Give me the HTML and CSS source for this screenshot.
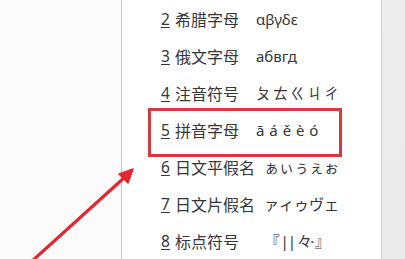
FILE: index.html
```html
<!DOCTYPE html>
<html lang="zh-CN">
<head>
<meta charset="utf-8">
<link rel="stylesheet" href="styles.css">
</head>
<body>
<div class="page">
  <div class="left"></div>
  <div class="panel">
    <ul class="menu">
      <li class="row"><span class="num">2</span><span class="label">希腊字母</span><span class="ex">αβγδε</span></li>
      <li class="row"><span class="num">3</span><span class="label">俄文字母</span><span class="ex">абвгд</span></li>
      <li class="row"><span class="num">4</span><span class="label">注音符号</span><span class="ex ex-bpmf">ㄆㄊㄍㄐㄔ</span></li>
      <li class="row"><span class="num">5</span><span class="label">拼音字母</span><span class="ex ex-pinyin">ā á ě è ó</span></li>
      <li class="row"><span class="num">6</span><span class="label">日文平假名</span><span class="ex ex-kana">ぁぃぅぇぉ</span></li>
      <li class="row"><span class="num">7</span><span class="label">日文片假名</span><span class="ex ex-kana">ァィゥヴェ</span></li>
      <li class="row"><span class="num">8</span><span class="label">标点符号</span><span class="ex ex-punct">『<span class="latin bars">||</span>々<span class="latin">·</span>』</span></li>
    </ul>
    <div class="highlight"></div>
  </div>
  <div class="right"></div>
  <svg class="arrow" width="405" height="259" viewBox="0 0 405 259">
    <line x1="31" y1="262" x2="125" y2="177" stroke="#e0282e" stroke-width="3.2" stroke-linecap="round"/>
    <polygon points="133,169 119,174 128,183" fill="#e0282e" stroke="#e0282e" stroke-width="1.5" stroke-linejoin="round"/>
  </svg>
</div>
</body>
</html>
```

FILE: styles.css
```css
html, body {
  margin: 0;
  padding: 0;
}
body {
  font-family: "Noto Sans", "Noto Sans CJK SC", sans-serif;
  color: #363636;
  background: #ffffff;
}
.page {
  position: relative;
  display: flex;
  width: 405px;
  height: 259px;
  overflow: hidden;
}
.left {
  width: 121px;
  background: #fbfbfb;
}
.panel {
  position: relative;
  width: 259px;
  background: #ffffff;
  border-left: 1px solid #c6c6c6;
  border-right: 1px solid #d2d2d2;
}
.right {
  flex: 1;
  background: linear-gradient(180deg, #ededed, #eaeaea);
}
.menu {
  list-style: none;
  margin: 0;
  padding: 0 0 0 39px;
}
.row {
  display: flex;
  align-items: center;
  height: 37px;
  font-size: 16px;
  white-space: nowrap;
}
.num {
  font-family: "Noto Sans", sans-serif;
  font-size: 15.5px;
  text-decoration: underline;
  text-underline-offset: 2px;
  text-decoration-thickness: 1px;
  width: 14px;
}
.label {
  font-family: "Noto Sans CJK SC", sans-serif;
  min-width: 72px;
  margin-right: 9px;
}
.ex {
  font-family: "Noto Sans", "Noto Sans CJK SC", sans-serif;
  font-size: 15px;
}
.ex-bpmf {
  font-family: "Noto Sans CJK TC", sans-serif;
  font-size: 15px;
  letter-spacing: 2px;
}
.ex-pinyin {
  letter-spacing: 0.5px;
}
.ex-kana {
  font-family: "Noto Sans CJK JP", sans-serif;
  font-size: 15px;
}
.ex-punct {
  font-family: "Noto Sans CJK SC", sans-serif;
  font-size: 15px;
  font-feature-settings: "palt";
  letter-spacing: -2px;
  padding-left: 16px;
}
.latin {
  font-family: "Noto Sans", sans-serif;
  letter-spacing: 0;
  margin: 0 1px;
}
.bars {
  letter-spacing: -1px;
  margin: 0 2px 0 3px;
}
.highlight {
  position: absolute;
  left: 26px;
  top: 108px;
  width: 188px;
  height: 43px;
  border: 3px solid #d63a40;
}
.arrow {
  position: absolute;
  left: 0;
  top: 0;
  pointer-events: none;
}
```
